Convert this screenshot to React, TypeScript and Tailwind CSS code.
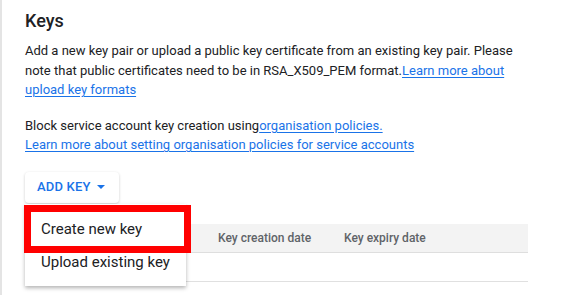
import React from 'react'

const linkClass = 'text-[#1a73e8] underline underline-offset-2 decoration-1'

function KeysSection() {
  return (
    <div className="relative h-[295px] w-[562px] overflow-hidden border-l-2 border-[#e4e4e4] bg-white pl-[23px] pt-[9px] font-['Roboto',sans-serif] text-[#202124]">
      <h2 className="text-[18px] font-medium leading-[24px]">Keys</h2>

      <p className="mt-[8px] w-[503px] text-[13px] leading-[19.5px]">
        Add a new key pair or upload a public key certificate from an existing key pair. Please note that public
        certificates need to be in RSA_X509_PEM format.
        <a className={linkClass}>Learn more about upload key formats</a>
      </p>

      <div className="mt-[16px] w-[503px] text-[13px] leading-[19.5px]">
        <p>
          Block service account key creation using<a className={linkClass}>organisation policies.</a>
        </p>
        <a className={`block ${linkClass}`}>Learn more about setting organisation policies for service accounts</a>
      </div>

      {/* Add key button */}
      <button className="mt-[17px] flex h-[31px] w-[94px] items-center rounded-[4px] bg-white pl-[12px] text-[13px] font-medium tracking-[0.2px] text-[#1a73e8] shadow-[0_1px_3px_rgba(0,0,0,0.2)]">
        ADD KEY
        <svg className="ml-[5px] h-[10px] w-[10px]" viewBox="0 0 10 10">
          <path d="M1 3h8L5 7z" fill="#1a73e8" />
        </svg>
      </button>

      {/* Keys table */}
      <div className="mt-[21px] w-[503px] text-[12px] font-medium text-[#5f6368]">
        <div className="flex h-[29px] items-center border-b border-[#dedede] bg-[#f3f3f3]">
          <span className="w-[193px]"></span>
          <span className="w-[126px]">Key creation date</span>
          <span>Key expiry date</span>
        </div>
        <div className="h-[29px] border-b border-[#e0e0e0]"></div>
      </div>

      {/* Dropdown menu */}
      <div className="absolute left-[23px] top-[204px] w-[161px] bg-white py-[8px] text-[15px] leading-[20px] text-[#202124] shadow-[0_2px_4px_rgba(0,0,0,0.3)]">
        <div className="flex h-[33px] items-center pl-[16px]">Create new key</div>
        <div className="flex h-[33px] items-center pl-[16px]">Upload existing key</div>
      </div>

      {/* Highlight */}
      <div className="absolute left-[22px] top-[205px] h-[48px] w-[167px] border-[7px] border-[#ff0000]"></div>
    </div>
  )
}

export default function App() {
  return <KeysSection />
}
